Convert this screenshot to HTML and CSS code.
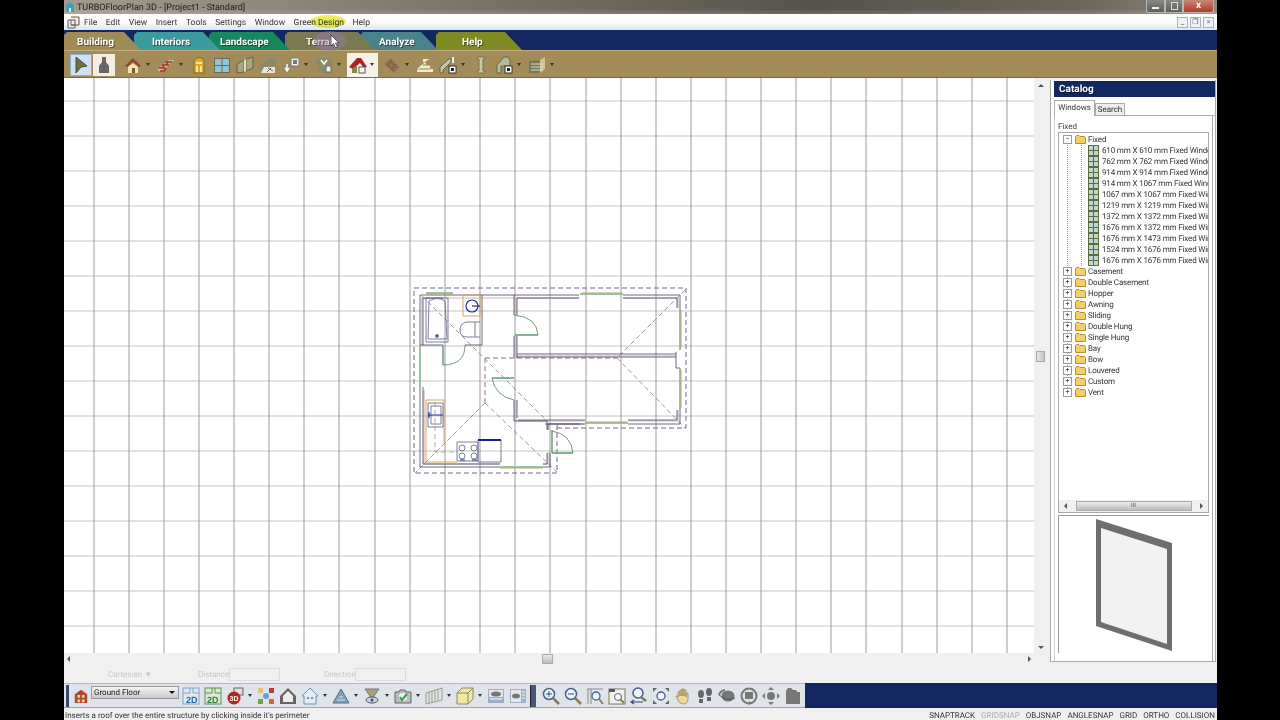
FILE: index.html
```html
<!DOCTYPE html>
<html lang="en">
<head>
    <meta charset="UTF-8">
    <title>TURBOFloorPlan 3D</title>
    <link rel="stylesheet" href="styles.css">
</head>
<body>

<svg class="defs" width="0" height="0">
    <symbol id="folder" viewBox="0 0 11 9"><path d="M.5 8.5V1.5L1.5.5H4L5 1.5H9.5L10.5 2.5V8.5Z" fill="#f3cf6a" stroke="#b8912f"/></symbol>
    <symbol id="win" viewBox="0 0 11 11"><rect width="11" height="11" fill="#5f6b3c"/><path d="M1 1H5V5H1ZM6 1H10V5H6ZM1 6H5V10H1ZM6 6H10V10H6Z" fill="#bcd6d0"/></symbol>
    <symbol id="brick" viewBox="0 0 18 18"><path d="M1 13L12 4H17L6 15H1Z" fill="#c9b9a0"/><path d="M2 12H8M5 9H12M8 6H15M3 15H7M5 12L7 10M9 9L11 7M7 15L9 12" stroke="#a8332b" stroke-width="1.6" fill="none"/></symbol>
</svg>

<div class="app">
    <div class="titlebar">
        <svg class="app-icon" width="10" height="12" viewBox="0 0 10 12"><path d="M1 11V4L5 1L9 4V11Z" fill="#3f9fb8"/><path d="M4 11V7H6V11Z" fill="#d5efe9"/></svg>
        <span class="title-text">TURBOFloorPlan 3D - [Project1 - Standard]</span>
        <div class="win-btns">
            <div class="win-btn wb-min"><span class="glyph-min"></span></div>
            <div class="win-btn wb-max"><span class="glyph-max"></span></div>
            <div class="win-btn wb-close">x</div>
        </div>
    </div>

    <div class="menubar">
        <svg class="menu-icon" width="13" height="13" viewBox="0 0 13 13"><path d="M1 4H8V12H1ZM4 1H12V9H4" fill="#e8eef5" stroke="#77513b"/><path d="M4 4V9H8" fill="none" stroke="#3d6fb4"/></svg>
        <a class="menu-item">File</a>
        <a class="menu-item">Edit</a>
        <a class="menu-item">View</a>
        <a class="menu-item">Insert</a>
        <a class="menu-item">Tools</a>
        <a class="menu-item">Settings</a>
        <a class="menu-item">Window</a>
        <a class="menu-item">Green Design</a>
        <a class="menu-item">Help</a>
        <div class="doc-btns">
            <div class="doc-btn">_</div>
            <div class="doc-btn">&#10064;</div>
            <div class="doc-btn">&#215;</div>
        </div>
    </div>

    <div class="tabstrip">
        <div class="tab tab-building">Building</div>
        <div class="tab tab-interiors">Interiors</div>
        <div class="tab tab-landscape">Landscape</div>
        <div class="tab tab-terrain">Terrain</div>
        <div class="tab tab-analyze">Analyze</div>
        <div class="tab tab-help">Help</div>
    </div>

    <div class="toolbar">
        <div class="tbtn tbtn-on"><svg width="16" height="18" viewBox="0 0 16 18"><path d="M3 1L14 10L8 11L3 17Z" fill="#6d7045" stroke="#4a4c2e"/></svg></div>
        <div class="tbtn tbtn-light"><svg width="14" height="18" viewBox="0 0 14 18"><path d="M5 1H9V6L12 10V17H2V10L5 6Z" fill="#666"/></svg></div>
        <span class="spacer4"></span>
        <svg class="ic" viewBox="0 0 18 18"><path d="M1 10L9 2L17 10L15 11L9 6L3 11Z" fill="#8a4a32"/><path d="M4 11L9 7L14 11V17H4Z" fill="#f0e3b4"/><path d="M8 12H11V17H8Z" fill="#7d5a32"/></svg><span class="drop"></span>
        <svg class="ic"><use href="#brick"/></svg><span class="drop"></span>
        <svg class="ic" viewBox="0 0 18 18"><path d="M4 17V4Q9-1 14 4V17Z" fill="#d8a92c" stroke="#8f6c18"/><path d="M6 6H12V8H6ZM6 10H8V16H6ZM10 10H12V16H10Z" fill="#f7e59a"/></svg>
        <svg class="ic" viewBox="0 0 18 18"><rect x="1" y="2" width="16" height="15" fill="#6d6a4c"/><path d="M2 3H8.500V9H2ZM9.500 3H16V9H9.500ZM2 10H8.500V16H2ZM9.500 10H16V16H9.500Z" fill="#8fc7d8"/></svg>
        <svg class="ic" viewBox="0 0 18 18"><path d="M1 8L8 4V16L1 17ZM10 3L17 1V12L10 15Z" fill="#a9a583" stroke="#66633f"/><path d="M8 4L10 3V15L8 16Z" fill="#e6e0bd"/></svg>
        <svg class="ic" viewBox="0 0 18 18"><path d="M1 9L12 2H17V11H9L3 17H1Z" fill="#8c8a68"/><path d="M5 11H16V17H2Z" fill="#e8e6dc"/><path d="M9 12L14 15M12 12L8 16" stroke="#6b6b6b"/></svg>
        <svg class="ic" viewBox="0 0 18 18"><path d="M1 9L8 6V16H1Z" fill="#8f8c63"/><path d="M9 2H17V10H9Z" fill="#f2f0e6" stroke="#777"/><path d="M11 4H15V8H11Z" fill="#777"/><path d="M5 8V14M3 12L5 15L7 12" stroke="#fff" stroke-width="1.500" fill="none"/></svg><span class="drop"></span>
        <svg class="ic" viewBox="0 0 18 18"><path d="M1 2H17V9H14V17H4V9H1Z" fill="#8d8b66"/><path d="M6 4L9 8L12 4" fill="none" stroke="#fff" stroke-width="1.500"/><path d="M11 10H16V16H11Z" fill="#f2f0e6" stroke="#666"/></svg><span class="drop"></span>
        <div class="tbtn-wide">
            <svg width="20" height="18" viewBox="0 0 20 18"><path d="M1 11L9 2H13L19 11H15L12 7L5 13Z" fill="#a92424"/><path d="M4 13L9 9V17H4Z" fill="#7b8d45"/><rect x="11" y="11" width="6" height="6" fill="#fff" stroke="#555"/></svg>
            <span class="drop drop-dark"></span>
        </div>
        <svg class="ic ic-dim" viewBox="0 0 18 18"><path d="M1 8L7 2L17 11L11 17Z" fill="#7d7565"/><path d="M4 8L11 15M7 5L14 12M9 4L4 10M13 8L8 14" stroke="#8f4a3a" stroke-width="1.500"/></svg><span class="drop"></span>
        <svg class="ic" viewBox="0 0 18 18"><path d="M1 16H17V13H14V9H10V6H7V3H13L2 12Z" fill="#f2edc8"/><path d="M3 13H14M7 9H14M9 6H14" stroke="#8a865c"/></svg>
        <svg class="ic" viewBox="0 0 18 18"><path d="M1 11L10 3H12V6L4 14V17H1Z" fill="#c8c6a8" stroke="#66664a"/><path d="M14 1V7" stroke="#eee" stroke-width="2"/><rect x="10" y="10" width="7" height="7" fill="#fff" stroke="#333"/><rect x="12" y="12" width="3" height="3" fill="#222"/></svg><span class="drop"></span>
        <svg class="ic" viewBox="0 0 18 18"><path d="M5 1H13V3H11V15H13V17H5V15H7V3H5Z" fill="#c9c7a4" stroke="#77754f"/></svg>
        <svg class="ic" viewBox="0 0 18 18"><path d="M2 17V9L9 1H13L15 4V10H6V17Z" fill="#b8b89a" stroke="#66664a"/><rect x="10" y="10" width="7" height="7" fill="#fff" stroke="#333"/><rect x="12" y="12" width="3" height="3" fill="#222"/></svg><span class="drop"></span>
        <svg class="ic" viewBox="0 0 18 18"><path d="M1 5L12 4V17H1Z" fill="#77775a"/><path d="M12 4L17 1V13L12 17Z" fill="#c8c59e"/><path d="M3 8H15M3 11H15M3 14H15" stroke="#e1dfc4"/></svg><span class="drop"></span>
    </div>

    <div class="workarea">
        <div class="drawing">
            <div class="drawing-top">
                <svg class="canvas" width="970" height="575" viewBox="64 78 970 575">
                    <path class="grid-h" d="M64 101H1034M64 136H1034M64 171H1034M64 206H1034M64 241H1034M64 276H1034M64 311H1034M64 346H1034M64 381H1034M64 416H1034M64 451H1034M64 486H1034M64 521H1034M64 556H1034M64 591H1034M64 626H1034"/>
                    <path class="grid-v" d="M94 78V653M129 78V653M164 78V653M199 78V653M234 78V653M269 78V653M304 78V653M339 78V653M375 78V653M410 78V653M445 78V653M480 78V653M515 78V653M550 78V653M586 78V653M621 78V653M656 78V653M691 78V653M726 78V653M761 78V653M796 78V653M831 78V653M866 78V653M902 78V653M937 78V653M972 78V653M1007 78V653"/>

                    <path class="roof-line" d="M414 288H686V428H554M557 425V473H414V288"/>
                    <path class="roof-ridge" d="M422 296L548 422M685 290L617 358L685 428M485 403L415 473M485 403L557 472"/>
                    <path class="roof-inner" d="M485 358H617M485 358V403"/>
                    <path class="roof-tan" d="M435 402V452H457"/>

                    <path class="wall-tint" d="M422 345V298H579M623 298H678V308M678 410V421H628M585 421H516V400M516 358V336M516 315V298M516 356H676M424 390V464H500M543 464H548V452M548 430V424H584"/>
                    <path class="wall" d="M420 345V295H579M623 295H680V308M680 410V424H628M585 424H548V430M550 453V467H543M500 467H420V387M423 387V464H500M543 464H547V453M547 430V421H514V400M517 418V400M514 358V336M517 358V336M514 315V295M517 315V298H579M623 298H677V308M677 410V420H628M585 420H518M423 345V298H443M420 345H443M465 345H482V295M517 354H676M517 357H676M676 352V368H680M580 424H545"/>
                    <path class="window-g" d="M426 293H453M420 345V387M580 294H623M680 308V350M680 368V410M585 423H628M500 467H543"/>
                    <path class="window-t" d="M426 294H453M581 293H622M681 310V348M681 370V408M586 422H627M500 468H543"/>
                    <path class="door-leaf" d="M515 335H538M443 345V365M492 378H514M552 430V453M552 453H573"/>
                    <path class="door-arc" d="M514 315Q537 317 538 335M443 365Q465 365 465 345M492 378Q495 396 514 400M552 431Q571 434 573 453"/>

                    <path class="fixture" d="M426 298H448V342H426ZM429 301Q437 296 445 301L447 339H428Z"/>
                    <circle class="fixture-blue" cx="437" cy="336" r="1.200"/>
                    <path class="orange" d="M463 295H480V316H463ZM426 400H444V443M426 400V462H457"/>
                    <circle class="fixture-blue" cx="472" cy="306" r="6"/>
                    <path class="fixture-blue" d="M472 306H480"/>
                    <path class="fixture" d="M480 322H467Q460 323 460 330Q460 337 467 337H480M475 322V337"/>
                    <path class="fixture" d="M428 403H443V427H428ZM431 406H441V424H431Z"/>
                    <path class="fixture-blue" d="M428 415H443M429 412V418"/>
                    <path class="fixture" d="M457 442H478V461H457Z"/>
                    <circle class="fixture" cx="462" cy="448" r="3"/><circle class="fixture" cx="474" cy="448" r="3"/>
                    <circle class="fixture" cx="462" cy="456" r="3"/><circle class="fixture" cx="474" cy="456" r="3"/>
                    <path class="fixture-blue" d="M460 460H465M472 460H477"/>
                    <path class="fixture" d="M478 440H501V462H478Z"/>
                    <path class="counter-top" d="M478 440H501"/>
                </svg>
                <div class="vscroll">
                    <span class="arrow-up"></span>
                    <span class="vthumb"></span>
                    <span class="arrow-down"></span>
                </div>
            </div>
            <div class="hscroll">
                <span class="arrow-left"></span>
                <span class="hthumb"></span>
                <span class="arrow-right"></span>
            </div>
        </div>

        <aside class="catalog">
            <div class="cat-head">Catalog</div>
            <div class="cat-tabs">
                <div class="cat-tab cat-tab-on">Windows</div>
                <div class="cat-tab">Search</div>
            </div>
            <div class="cat-body">
                <div class="cat-label">Fixed</div>
                <div class="tree-box">
                    <div class="tree">
                        <div class="tree-row"><span class="exp">&#8722;</span><svg class="folder"><use href="#folder"/></svg>Fixed</div>
                        <div class="kids">
                            <div class="kid"><svg class="win"><use href="#win"/></svg>610 mm X 610 mm Fixed Window</div>
                            <div class="kid"><svg class="win"><use href="#win"/></svg>762 mm X 762 mm Fixed Window</div>
                            <div class="kid"><svg class="win"><use href="#win"/></svg>914 mm X 914 mm Fixed Window</div>
                            <div class="kid"><svg class="win"><use href="#win"/></svg>914 mm X 1067 mm Fixed Window</div>
                            <div class="kid"><svg class="win"><use href="#win"/></svg>1067 mm X 1067 mm Fixed Window</div>
                            <div class="kid"><svg class="win"><use href="#win"/></svg>1219 mm X 1219 mm Fixed Window</div>
                            <div class="kid"><svg class="win"><use href="#win"/></svg>1372 mm X 1372 mm Fixed Window</div>
                            <div class="kid"><svg class="win"><use href="#win"/></svg>1676 mm X 1372 mm Fixed Window</div>
                            <div class="kid"><svg class="win"><use href="#win"/></svg>1676 mm X 1473 mm Fixed Window</div>
                            <div class="kid"><svg class="win"><use href="#win"/></svg>1524 mm X 1676 mm Fixed Window</div>
                            <div class="kid"><svg class="win"><use href="#win"/></svg>1676 mm X 1676 mm Fixed Window</div>
                        </div>
                        <div class="tree-row"><span class="exp">+</span><svg class="folder"><use href="#folder"/></svg>Casement</div>
                        <div class="tree-row"><span class="exp">+</span><svg class="folder"><use href="#folder"/></svg>Double Casement</div>
                        <div class="tree-row"><span class="exp">+</span><svg class="folder"><use href="#folder"/></svg>Hopper</div>
                        <div class="tree-row"><span class="exp">+</span><svg class="folder"><use href="#folder"/></svg>Awning</div>
                        <div class="tree-row"><span class="exp">+</span><svg class="folder"><use href="#folder"/></svg>Sliding</div>
                        <div class="tree-row"><span class="exp">+</span><svg class="folder"><use href="#folder"/></svg>Double Hung</div>
                        <div class="tree-row"><span class="exp">+</span><svg class="folder"><use href="#folder"/></svg>Single Hung</div>
                        <div class="tree-row"><span class="exp">+</span><svg class="folder"><use href="#folder"/></svg>Bay</div>
                        <div class="tree-row"><span class="exp">+</span><svg class="folder"><use href="#folder"/></svg>Bow</div>
                        <div class="tree-row"><span class="exp">+</span><svg class="folder"><use href="#folder"/></svg>Louvered</div>
                        <div class="tree-row"><span class="exp">+</span><svg class="folder"><use href="#folder"/></svg>Custom</div>
                        <div class="tree-row"><span class="exp">+</span><svg class="folder"><use href="#folder"/></svg>Vent</div>
                    </div>
                    <div class="tree-scroll">
                        <span class="arrow-left"></span>
                        <span class="tree-thumb">III</span>
                        <span class="arrow-right"></span>
                    </div>
                </div>
                <div class="preview">
                    <svg width="82" height="138" viewBox="1093 515 82 138">
                        <path d="M1096 518L1172 542V650L1096 625Z" fill="#6e6e6e"/>
                        <path d="M1101 527L1167 548V643L1101 621Z" fill="#f2f2f2"/>
                    </svg>
                </div>
            </div>
        </aside>
    </div>

    <div class="coordbar">
        <span class="coord-mode">Cartesian &#9660;</span>
        <span class="coord-dist">Distance</span><span class="coord-input"></span>
        <span class="coord-dir">Direction</span><span class="coord-input"></span>
    </div>

    <div class="viewbar">
        <div class="viewtools">
            <span class="grip"></span>
            <svg class="vi vi-first" viewBox="0 0 18 18"><path d="M2 7L9 2L16 7V17H2Z" fill="#b5462f"/><path d="M5 8H8V11H5ZM10 8H13V11H10ZM5 13H8V16H5ZM10 13H13V16H10Z" fill="#cfe3a5"/></svg>
            <div class="floor-select"><span>Ground Floor</span><span class="select-arrow"></span></div>
            <svg class="vi vi-tight" viewBox="0 0 18 18"><rect x="1" y="1" width="16" height="16" fill="#dfe9f5" stroke="#8aa3c4"/><path d="M1 6H8V1M11 1V6H17" fill="none" stroke="#8aa3c4"/><text x="4" y="16" class="v-label v-blue">2D</text></svg>
            <svg class="vi" viewBox="0 0 18 18"><rect x="1" y="1" width="16" height="16" fill="#d9ead2" stroke="#5f8f57"/><path d="M1 6H8V1M11 1V6H17" fill="none" stroke="#5f8f57"/><text x="3" y="16" class="v-label v-green">2D</text></svg>
            <svg class="vi" viewBox="0 0 18 18"><rect x="8" y="1" width="9" height="7" fill="#ddd" stroke="#666"/><circle cx="8" cy="11" r="6.500" fill="#b3261e"/><text x="3.500" y="13.500" class="v-label v-white">3D</text></svg><span class="drop"></span>
            <svg class="vi" viewBox="0 0 18 18"><path d="M1 1H6V6H1Z" fill="#d9c67a"/><path d="M12 1H17V6H12Z" fill="#c43a2c"/><path d="M1 12H6V17H1Z" fill="#69a845"/><path d="M12 12H17V17H12Z" fill="#d36a2b"/><circle cx="9" cy="9" r="3" fill="#6a9fd8"/></svg>
            <svg class="vi" viewBox="0 0 18 18"><path d="M1 9L9 1L17 9V17H1Z" fill="#666"/><path d="M4 9L9 4L14 9V15H4Z" fill="#eee"/></svg>
            <svg class="vi" viewBox="0 0 18 18"><path d="M1 9L9 1L17 9H15V17H3V9Z" fill="#e3edf5" stroke="#6f93ad"/><path d="M6 10H8V12H6ZM10 10H12V12H10Z" fill="#6f93ad"/></svg><span class="drop"></span>
            <svg class="vi" viewBox="0 0 18 18"><path d="M1 16L9 2L17 16Z" fill="#7f9fb8" stroke="#586f82"/><path d="M5 13H13M7 10H11" stroke="#dce7ef"/></svg><span class="drop"></span>
            <svg class="vi" viewBox="0 0 18 18"><path d="M2 2H16L11 9V11H7V9Z" fill="#a8a078" stroke="#777"/><ellipse cx="9" cy="13" rx="6" ry="3" fill="#cfd9e5" stroke="#555"/><circle cx="9" cy="13" r="1.500" fill="#2d4f87"/></svg><span class="drop"></span>
            <svg class="vi" viewBox="0 0 18 18"><path d="M1 5H5L6 3H11L12 5H17V16H1Z" fill="#bbb" stroke="#666"/><circle cx="9" cy="10" r="4" fill="#eef"/><path d="M6 10L8 13L13 7" fill="none" stroke="#3a9a3a" stroke-width="2"/></svg><span class="drop"></span>
            <svg class="vi" viewBox="0 0 18 18"><path d="M1 6L17 1V13L1 17Z" fill="#e6e6df" stroke="#999"/><path d="M4 5V16M7 4V15M10 3V14M13 2V13" stroke="#999"/></svg><span class="drop"></span>
            <svg class="vi" viewBox="0 0 18 18"><path d="M1 6L6 1H17V12L12 17H1Z" fill="#eee7a8" stroke="#8f8a52"/><path d="M1 6H12V17M12 6L17 1" fill="none" stroke="#8f8a52"/></svg><span class="drop"></span>
            <svg class="vi" viewBox="0 0 18 18"><rect x="1" y="2" width="16" height="14" fill="#9eb0c5"/><rect x="2" y="3" width="14" height="7" fill="#e4e8ee"/><ellipse cx="9" cy="7" rx="5" ry="2.500" fill="#777"/><path d="M3 12H15" stroke="#fff"/></svg>
            <svg class="vi" viewBox="0 0 18 18"><rect x="1" y="2" width="16" height="14" fill="#9eb0c5"/><rect x="2" y="3" width="10" height="12" fill="#e4e8ee"/><ellipse cx="7" cy="9" rx="4" ry="2.500" fill="#777"/><path d="M13 5H16M13 8H16M13 11H16" stroke="#fff"/></svg>
            <span class="vsep"></span>
            <svg class="vi vi-zoom" viewBox="0 0 18 18"><circle cx="7" cy="7" r="5.500" fill="#eef3fa" stroke="#46608c" stroke-width="1.500"/><path d="M11 11L17 17" stroke="#8a7c50" stroke-width="2.500"/><path d="M4 7H10M7 4V10" stroke="#2f4a80"/></svg>
            <svg class="vi" viewBox="0 0 18 18"><circle cx="7" cy="7" r="5.500" fill="#eef3fa" stroke="#46608c" stroke-width="1.500"/><path d="M11 11L17 17" stroke="#8a7c50" stroke-width="2.500"/><path d="M4 7H10" stroke="#2f4a80"/></svg>
            <svg class="vi" viewBox="0 0 18 18"><path d="M1 2H17M2 2V17M5 2V17" stroke="#888"/><circle cx="10" cy="9" r="4" fill="#eef3fa" stroke="#46608c" stroke-width="1.300"/><path d="M13 12L17 17" stroke="#8a7c50" stroke-width="2"/></svg>
            <svg class="vi" viewBox="0 0 18 18"><rect x="1" y="2" width="16" height="15" fill="#f3f1e8" stroke="#777"/><path d="M1 2H7V5H1Z" fill="#555"/><circle cx="10" cy="10" r="3.500" fill="#fff" stroke="#46608c"/><path d="M12 12L16 16" stroke="#8a7c50" stroke-width="2"/></svg>
            <svg class="vi" viewBox="0 0 18 18"><circle cx="8" cy="6" r="5" fill="#eef3fa" stroke="#46608c" stroke-width="1.500"/><path d="M11 10L16 14" stroke="#8a7c50" stroke-width="2.500"/><path d="M1 15H13M4 13L1 15L4 17" fill="none" stroke="#2f4a80" stroke-width="1.200"/></svg>
            <svg class="vi" viewBox="0 0 18 18"><circle cx="9" cy="9" r="4" fill="#eef3fa" stroke="#46608c" stroke-width="1.300"/><path d="M1 1H5L1 5ZM17 1V5L13 1ZM1 17V13L5 17ZM17 17H13L17 13Z" fill="#666"/></svg>
            <svg class="vi" viewBox="0 0 18 18"><path d="M4 10V5H6V9V3H8V9V2H10V9V3H12V10V6H14V12Q14 17 9 17Q6 17 4 13L2 9L4 9Z" fill="#ecd99e" stroke="#8a7c50" stroke-width=".7"/></svg>
            <svg class="vi" viewBox="0 0 18 18"><ellipse cx="5" cy="7" rx="3" ry="4" fill="#666"/><path d="M3 12H7V16H3Z" fill="#666"/><ellipse cx="13" cy="5" rx="3" ry="4" fill="#666"/><path d="M11 10H15V14H11Z" fill="#666"/></svg>
            <svg class="vi" viewBox="0 0 18 18"><ellipse cx="10" cy="9" rx="6.500" ry="5.500" fill="#777"/><path d="M1 8Q9 15 17 11" fill="none" stroke="#555"/><path d="M1 8Q2 4 7 3" fill="none" stroke="#777" stroke-width="2"/></svg>
            <svg class="vi" viewBox="0 0 18 18"><circle cx="9" cy="9" r="7.500" fill="none" stroke="#777" stroke-width="2"/><rect x="5" y="5" width="8" height="7" fill="#777"/><path d="M9 14L12 16L9 18" fill="#777"/></svg>
            <svg class="vi" viewBox="0 0 18 18"><circle cx="9" cy="9" r="4" fill="#777"/><path d="M9 0L12 3H6ZM9 18L6 15H12ZM0 9L3 6V12ZM18 9L15 12V6Z" fill="#777"/></svg>
            <svg class="vi" viewBox="0 0 18 18"><path d="M2 17V4L4 1H7L9 3H12L13 5H16V17Z" fill="#777"/></svg>
        </div>
        <div class="navy-fill"></div>
    </div>

    <div class="statusbar">
        <span class="status-msg">Inserts a roof over the entire structure by clicking inside it's perimeter</span>
        <div class="status-flags">
            <span class="flag">SNAPTRACK</span>
            <span class="flag flag-off">GRIDSNAP</span>
            <span class="flag">OBJSNAP</span>
            <span class="flag">ANGLESNAP</span>
            <span class="flag">GRID</span>
            <span class="flag">ORTHO</span>
            <span class="flag">COLLISION</span>
        </div>
    </div>

    <div class="cursor-glow"></div>
    <div class="cursor-halo"></div>
    <svg class="cursor" width="10" height="15" viewBox="0 0 10 15"><path d="M1 1V12L3.500 9.500L5.500 14L7.500 13L5.500 9H9Z" fill="#fff" stroke="#333" stroke-width=".8"/></svg>
</div>

</body>
</html>
```

FILE: styles.css
```css
html, body {
    margin: 0;
    height: 100%;
    background-color: #000;
    overflow: hidden;
}
.defs {
    position: absolute;
}
.app {
    position: relative;
    display: flex;
    flex-direction: column;
    width: 1153px;
    height: 720px;
    margin-left: 64px;
    background-color: #f0f0f0;
    font-family: Roboto, "Liberation Sans", sans-serif;
    text-rendering: geometricPrecision;
    overflow: hidden;
}

/* title bar */
.titlebar {
    display: flex;
    align-items: center;
    height: 14px;
    background: linear-gradient(90deg, #a39c8e 0%, #8c8678 20%, #6f695e 45%, #57524a 65%, #6b655a 88%, #8e887b 100%);
    box-shadow: inset 0 -5px 4px -3px rgba(255, 255, 255, .18);
}
.app-icon {
    margin-left: 1px;
}
.title-text {
    margin-left: 2px;
    padding-top: 2px;
    font-size: 9px;
    color: #1d1d1d;
}
.win-btns {
    display: flex;
    margin-left: auto;
    margin-right: 3px;
    height: 13px;
    align-self: flex-start;
}
.win-btn {
    display: flex;
    align-items: center;
    justify-content: center;
    border: 1px solid #b8b8b0;
    border-top: 0;
    box-sizing: border-box;
    background: linear-gradient(#8a8a84, #5e5e58);
}
.wb-min { width: 19px; border-radius: 0 0 0 3px; }
.wb-max { width: 18px; }
.wb-close {
    width: 31px;
    background: linear-gradient(#c98878, #b03a28);
    border-radius: 0 0 3px 0;
    color: #fff;
    font-size: 10px;
    font-weight: bold;
    line-height: 10px;
}
.glyph-min {
    width: 7px;
    height: 2px;
    margin-top: 3px;
    background-color: #eee;
}
.glyph-max {
    width: 5px;
    height: 6px;
    border: 1px solid #ddd;
}

/* menu */
.menubar {
    display: flex;
    align-items: center;
    height: 16px;
    background: linear-gradient(#fff, #fafbfd 50%, #dfe4ef);
    font-size: 8.5px;
    color: #333;
}
.menu-icon {
    margin-left: 3px;
    margin-right: 4px;
}
.menu-item {
    margin-right: 8.5px;
    padding-top: 1px;
}
.doc-btns {
    display: flex;
    gap: 2px;
    margin-left: auto;
    margin-right: 3px;
}
.doc-btn {
    width: 9px;
    height: 9px;
    border: 1px solid #a9b2c2;
    background-color: #eef1f6;
    font-size: 7px;
    line-height: 8px;
    text-align: center;
    color: #455;
}

/* mode tabs */
.tabstrip {
    display: flex;
    align-items: flex-end;
    height: 21px;
    background-color: #12275f;
    border-bottom: 1px solid #c0ad7e;
    box-sizing: border-box;
}
.tab {
    position: relative;
    display: flex;
    align-items: center;
    height: 18px;
    box-sizing: border-box;
    padding-top: 3px;
    font-size: 10px;
    font-weight: bold;
    color: #fff;
    text-shadow: 1px 1px 0 rgba(0, 0, 0, .45);
    clip-path: polygon(3px 0, calc(100% - 17px) 0, 100% 100%, 0 100%, 0 3px);
}
.tab-building { z-index: 6; width: 77px; margin-right: -7px; padding-left: 13px; background-color: #a08a58; }
.tab-interiors { z-index: 5; width: 86px; margin-right: -11px; padding-left: 18px; background-color: #3b9a9c; }
.tab-landscape { z-index: 4; width: 81px; margin-right: -5px; padding-left: 11px; background-color: #17875c; }
.tab-terrain { z-index: 3; width: 90px; margin-right: -15px; padding-left: 21px; background-color: #7a7a52; }
.tab-analyze { z-index: 2; width: 78px; margin-right: -2px; padding-left: 19px; background-color: #4a828a; }
.tab-help { z-index: 1; width: 86px; padding-left: 26px; background-color: #7f8a22; }

/* building toolbar */
.toolbar {
    display: flex;
    align-items: center;
    height: 27px;
    padding-left: 6px;
    background-color: #a38b5a;
    box-shadow: inset 0 -1px 0 #7d6a44;
}
.tbtn {
    display: flex;
    align-items: center;
    justify-content: center;
    width: 22px;
    height: 22px;
    box-sizing: border-box;
}
.tbtn-on {
    background-color: #cfe1f2;
    border: 1px solid #8fb0cc;
    margin-right: 1px;
}
.tbtn-light {
    background-color: #f2eee2;
}
.spacer4 {
    width: 4px;
}
.ic {
    flex: none;
    width: 18px;
    height: 18px;
    margin-left: 5px;
}
.ic-dim {
    opacity: .75;
}
.drop {
    flex: none;
    width: 0;
    height: 0;
    margin: 0 2px 0 4px;
    border-left: 2px solid transparent;
    border-right: 2px solid transparent;
    border-top: 3px solid #333;
}
.tbtn-wide {
    display: flex;
    align-items: center;
    gap: 2px;
    width: 31px;
    height: 24px;
    margin-left: 4px;
    padding-left: 1px;
    box-sizing: border-box;
    background-color: #f5f1e6;
}
.tbtn-wide .drop {
    margin: 0;
}

/* work area */
.workarea {
    display: flex;
    height: 587px;
}
.drawing {
    width: 984px;
    display: flex;
    flex-direction: column;
}
.drawing-top {
    display: flex;
    height: 575px;
}
.canvas {
    display: block;
    background-color: #fff;
}
.grid-h {
    stroke: #d8d8d8;
    stroke-width: 1.4;
    fill: none;
}
.grid-v {
    stroke: #8c8c8c;
    stroke-width: 1;
    fill: none;
    opacity: .85;
}
.roof-line {
    fill: none;
    stroke: #75648a;
    stroke-width: 1;
    stroke-dasharray: 5 3;
}
.roof-ridge {
    fill: none;
    stroke: #7d7d8a;
    stroke-width: .8;
    stroke-dasharray: 5 3;
}
.roof-inner {
    fill: none;
    stroke: #b79bb5;
    stroke-width: 1.4;
    stroke-dasharray: 5 3;
}
.roof-tan {
    fill: none;
    stroke: #b9ad8f;
    stroke-width: 1;
    stroke-dasharray: 5 3;
}
.wall {
    fill: none;
    stroke: #4d4460;
    stroke-width: .8;
}
.wall-tint {
    fill: none;
    stroke: #cdb8be;
    stroke-width: 1.2;
}
.window-g {
    fill: none;
    stroke: #7fb48e;
    stroke-width: 1.6;
}
.window-t {
    fill: none;
    stroke: #b3a76a;
    stroke-width: 1;
}
.door-leaf {
    fill: none;
    stroke: #5f9a6f;
    stroke-width: 1.4;
}
.door-arc {
    fill: none;
    stroke: #4f7f62;
    stroke-width: .8;
}
.fixture {
    fill: none;
    stroke: #6d6f90;
    stroke-width: .9;
}
.fixture-blue {
    fill: none;
    stroke: #1f2f9c;
    stroke-width: 1.2;
}
.orange {
    fill: none;
    stroke: #d9a55f;
    stroke-width: 1;
}
.counter-top {
    stroke: #16237f;
    stroke-width: 2;
}
.vscroll {
    position: relative;
    display: flex;
    flex-direction: column;
    align-items: center;
    justify-content: space-between;
    width: 14px;
    padding: 6px 0 4px;
    box-sizing: border-box;
    background-color: #f0f0f0;
}
.vthumb {
    position: absolute;
    top: 273px;
    left: 2px;
    width: 9px;
    height: 11px;
    background: linear-gradient(90deg, #e6e6e6, #c4c4c4);
    border: 1px solid #aaa;
    box-sizing: border-box;
}
.hscroll {
    position: relative;
    display: flex;
    align-items: center;
    justify-content: space-between;
    width: 970px;
    height: 12px;
    padding: 0 3px;
    box-sizing: border-box;
    background-color: #f0f0f0;
}
.hthumb {
    position: absolute;
    left: 478px;
    top: 1px;
    width: 11px;
    height: 10px;
    background: linear-gradient(#e8e8e8, #bdbdbd);
    border: 1px solid #aaa;
    box-sizing: border-box;
}
.arrow-up, .arrow-down, .arrow-left, .arrow-right {
    width: 0;
    height: 0;
    border: 3px solid transparent;
}
.arrow-up { border-bottom-color: #555; border-top-width: 0; }
.arrow-down { border-top-color: #555; border-bottom-width: 0; }
.arrow-left { border-right-color: #555; border-left-width: 0; }
.arrow-right { border-left-color: #555; border-right-width: 0; }

/* catalog panel */
.catalog {
    width: 166px;
    height: 582px;
    margin: 2px 0 0 2px;
    padding: 1px 0 0 3px;
    box-sizing: border-box;
    background-color: #fff;
    border-left: 1px solid #aaa;
    border-bottom: 1px solid #aaa;
    border-right: 1px solid #aaa;
}
.cat-head {
    height: 16px;
    padding-left: 5px;
    background-color: #12275f;
    color: #fff;
    font-size: 10px;
    font-weight: bold;
    line-height: 18px;
    text-shadow: 1px 1px 0 rgba(0, 0, 0, .5);
}
.cat-tabs {
    display: flex;
    align-items: flex-end;
    height: 19px;
    border-bottom: 1px solid #aaa;
    box-sizing: border-box;
}
.cat-tab {
    width: 28px;
    height: 11px;
    border: 1px solid #aaa;
    border-bottom: 0;
    background-color: #eee;
    font-size: 8px;
    line-height: 12px;
    text-align: center;
    color: #333;
}
.cat-tab-on {
    width: 39px;
    height: 15px;
    margin-bottom: -1px;
    background-color: #fff;
    line-height: 14px;
}
.cat-body {
    height: 545px;
    margin-right: 2px;
    padding: 0 3px;
    box-sizing: border-box;
    border-left: 1px solid #ccc;
    border-right: 1px solid #aaa;
}
.cat-label {
    height: 16px;
    font-size: 8px;
    line-height: 21px;
    color: #444;
}
.tree-box {
    display: flex;
    flex-direction: column;
    height: 381px;
    border: 1px solid #aaa;
    box-sizing: border-box;
}
.tree {
    position: relative;
    flex: 1;
    padding: 1px 0 0 4px;
    overflow: hidden;
    font-size: 8px;
    line-height: 11px;
    letter-spacing: -.15px;
    color: #333;
    white-space: nowrap;
}
.tree::before {
    content: "";
    position: absolute;
    left: 8px;
    top: 7px;
    height: 248px;
    border-left: 1px dotted #999;
}
.tree-row {
    position: relative;
    display: flex;
    align-items: center;
    height: 11px;
}
.exp {
    flex: none;
    width: 7px;
    height: 7px;
    margin-right: 3px;
    border: 1px solid #999;
    background-color: #fff;
    font-size: 7px;
    line-height: 6px;
    text-align: center;
}
.folder {
    flex: none;
    width: 11px;
    height: 9px;
    margin-right: 2px;
}
.kids {
    margin-left: 18px;
    border-left: 1px dotted #999;
}
.kid {
    display: flex;
    align-items: center;
    height: 11px;
    padding-left: 6px;
}
.win {
    flex: none;
    width: 11px;
    height: 11px;
    margin-right: 3px;
}
.tree-scroll {
    display: flex;
    align-items: center;
    justify-content: space-between;
    height: 12px;
    padding: 0 5px;
    background-color: #f0f0f0;
}
.tree-thumb {
    width: 116px;
    height: 10px;
    background: linear-gradient(#ececec, #bcbcbc);
    border: 1px solid #aaa;
    box-sizing: border-box;
    font-size: 6px;
    line-height: 8px;
    text-align: center;
    color: #555;
}
.preview {
    display: flex;
    justify-content: center;
    height: 137px;
    margin-top: 2px;
    border-top: 1px solid #999;
    border-left: 1px solid #999;
}

/* coordinate row */
.coordbar {
    display: flex;
    align-items: center;
    height: 18px;
    padding-top: 1px;
    box-sizing: border-box;
    font-size: 8px;
    color: #c8c8c8;
    background-color: #f0f0f0;
}
.coord-mode {
    margin-left: 44px;
    width: 90px;
}
.coord-dist {
    width: 31px;
}
.coord-dir {
    margin-left: 44px;
    width: 31px;
}
.coord-input {
    width: 51px;
    height: 13px;
    border: 1px solid #ddd;
    box-sizing: border-box;
}

/* floor / view toolbar */
.viewbar {
    display: flex;
    height: 25px;
    background-color: #12275f;
}
.viewtools {
    display: flex;
    align-items: center;
    width: 741px;
    padding-left: 2px;
    box-sizing: border-box;
    background-color: #dfe3ea;
    border-top: 1px solid #aeb7c4;
    border-bottom: 1px solid #9aa2ae;
}
.grip {
    width: 3px;
    height: 22px;
    background-color: #39476a;
}
.vi {
    flex: none;
    width: 18px;
    height: 18px;
    margin-left: 4px;
}
.vi-first {
    width: 16px;
    margin-left: 4px;
}
.vi-tight {
    margin-left: 3px;
}
.vi-zoom {
    margin-left: 6px;
}
.v-label {
    font-family: "Liberation Sans", sans-serif;
    font-size: 9px;
    font-weight: bold;
}
.v-blue { fill: #2a64a8; }
.v-green { fill: #2f7d3b; }
.v-white { fill: #fff; font-size: 7px; }
.viewtools .drop {
    margin: 0 1px 0 4px;
}
.floor-select {
    display: flex;
    align-items: center;
    justify-content: space-between;
    width: 88px;
    height: 13px;
    margin: -7px 0 0 2px;
    padding: 0 3px 0 2px;
    box-sizing: border-box;
    background: linear-gradient(#f4f4f4, #c9c9c9);
    border: 1px solid #999;
    font-size: 8px;
    color: #222;
}
.select-arrow {
    width: 0;
    height: 0;
    border-left: 3px solid transparent;
    border-right: 3px solid transparent;
    border-top: 3px solid #111;
}
.vsep {
    flex: none;
    width: 5px;
    height: 22px;
    margin-left: 3px;
    background-color: #4a5878;
    border-left: 1px solid #223;
}
.navy-fill {
    flex: 1;
}

/* status bar */
.statusbar {
    display: flex;
    justify-content: space-between;
    height: 12px;
    font-size: 8px;
    line-height: 15px;
    color: #333;
    background-color: #f0f0f0;
}
.status-msg {
    margin-left: 1px;
}
.status-flags {
    display: flex;
    gap: 6px;
    margin-right: 2px;
}
.flag-off {
    color: #a8a8a8;
}

/* recorded mouse pointer */
.cursor-glow {
    position: absolute;
    z-index: 10;
    left: 246px;
    top: 15px;
    width: 36px;
    height: 13px;
    border-radius: 50%;
    background-color: #eef05c;
    mix-blend-mode: multiply;
}
.cursor-halo {
    position: absolute;
    z-index: 10;
    left: 250px;
    top: 31px;
    width: 32px;
    height: 20px;
    border-radius: 50%;
    background-color: rgba(150, 120, 170, .45);
}
.cursor {
    position: absolute;
    z-index: 11;
    left: 266px;
    top: 34px;
}
```
